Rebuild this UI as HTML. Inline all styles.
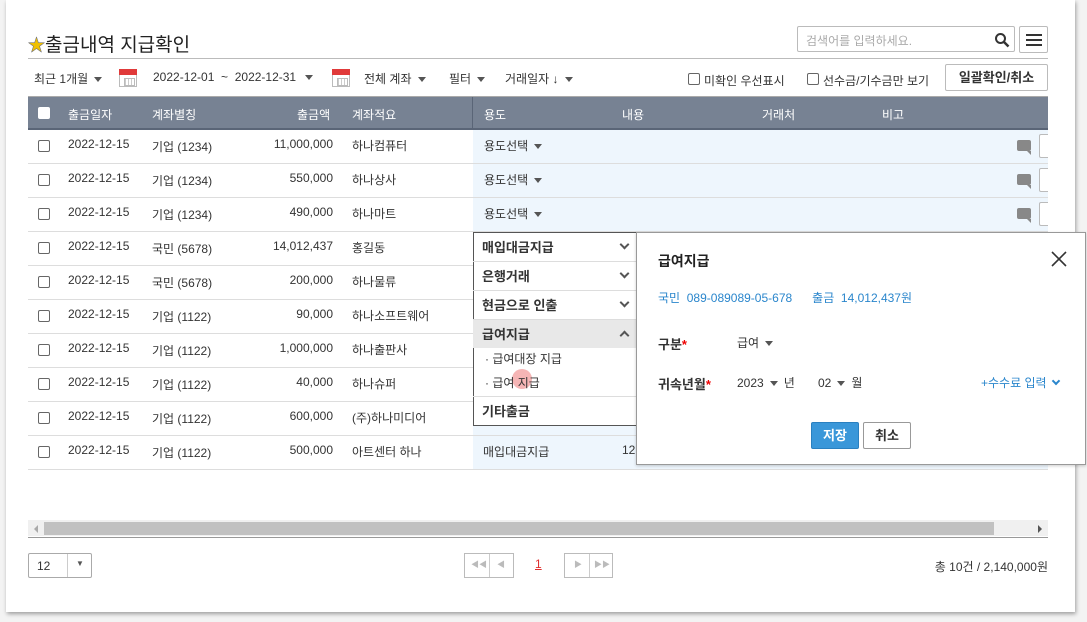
<!DOCTYPE html>
<html><head><meta charset="utf-8"><style>
*{box-sizing:border-box;margin:0;padding:0}
body{width:1087px;height:622px;background:#f3f3f3;font-family:"Liberation Sans","Noto Sans CJK KR",sans-serif;font-size:12px;color:#333;position:relative;overflow:hidden}
.a{position:absolute;white-space:nowrap}
.panel{position:absolute;left:6px;top:0;width:1069px;height:612px;background:#fff;box-shadow:1px 2px 4px rgba(0,0,0,.35)}
.cb{position:absolute;width:12px;height:12px;border:1px solid #666;border-radius:2px;background:#fff}
.tri{display:inline-block;width:0;height:0;border-left:4px solid transparent;border-right:4px solid transparent;border-top:5px solid #555;vertical-align:middle;margin-left:6px}
.row{position:absolute;left:28px;width:1020px;height:34px;border-bottom:1px solid #ddd;overflow:hidden}
.row .bl{position:absolute;left:445px;top:0;width:575px;height:33px;background:#eef6fd}
.cal{position:absolute;width:18px;height:18px;border:1px solid #bbb;background:#fff}
.cal:before{content:"";position:absolute;left:-1px;top:-1px;width:18px;height:6px;background:#e03a3a}
.cal:after{content:"";position:absolute;left:4px;top:8px;width:9px;height:6px;border:1px solid #bbb;background:repeating-linear-gradient(90deg,#ccc 0 1px,transparent 1px 3px)}
.dd{position:absolute;left:473px;width:163px;border-bottom:1px solid #ddd;font-weight:bold;font-size:13px;color:#333}
.chev{position:absolute;right:8px;width:7px;height:7px;border-right:2px solid #555;border-bottom:2px solid #555;transform:rotate(45deg)}
.msg{position:absolute;left:989px;top:10px;width:14px;height:11px;background:#888;border-radius:2px}
.msg:after{content:"";position:absolute;right:0;bottom:-4px;border-left:4px solid transparent;border-top:4px solid #888}
.sb{position:absolute;left:1011px;top:4px;width:20px;height:24px;border:1px solid #bbb;border-radius:2px;background:#fff}
.btn{position:absolute;border:1px solid #bbb;background:#fff}
</style></head><body>
<div class="panel"></div>
<div class="a" style="left:28px;top:30px;font-size:19px;color:#222"><span style="color:#f0c000;font-size:17px;-webkit-text-stroke:0.6px #777">★</span>출금내역 지급확인</div>
<div class="a" style="left:28px;top:58px;width:1020px;height:1px;background:#bbb"></div>
<div class="btn" style="left:797px;top:26px;width:218px;height:26px;border-radius:2px"><span class="a" style="left:8px;top:5px;color:#aaa;font-size:12px">검색어를 입력하세요.</span>
<svg class="a" style="left:196px;top:5px" width="16" height="16"><circle cx="6.5" cy="6.5" r="4.5" stroke="#333" stroke-width="2" fill="none"/><path d="M10 10l4.5 4.5" stroke="#333" stroke-width="2.5"/></svg></div>
<div class="btn" style="left:1019px;top:26px;width:29px;height:27px;border-radius:2px"><div class="a" style="left:6px;top:7px;width:16px;height:2px;background:#333;box-shadow:0 5px 0 #333,0 10px 0 #333"></div></div>

<div class="a" style="left:34px;top:70px">최근 1개월<span class="tri"></span></div>
<div class="cal" style="left:119px;top:69px"></div>
<div class="a" style="left:153px;top:70px">2022-12-01 &nbsp;~ &nbsp;2022-12-31 <span class="tri"></span></div>
<div class="cal" style="left:332px;top:69px"></div>
<div class="a" style="left:364px;top:70px">전체 계좌<span class="tri"></span></div>
<div class="a" style="left:449px;top:70px">필터<span class="tri"></span></div>
<div class="a" style="left:505px;top:70px">거래일자 ↓<span class="tri"></span></div>
<div class="cb" style="left:688px;top:73px"></div><div class="a" style="left:704px;top:72px">미확인 우선표시</div>
<div class="cb" style="left:807px;top:73px"></div><div class="a" style="left:823px;top:72px">선수금/기수금만 보기</div>
<div class="btn" style="left:945px;top:64px;width:103px;height:27px;border-radius:2px;font-weight:bold;font-size:13px;text-align:center;line-height:25px">일괄확인/취소</div>

<div class="a" style="left:28px;top:96px;width:1020px;height:34px;background:#778293;border-top:1px solid #aaa;border-bottom:2px solid #5a6577;color:#fff">
<div class="cb" style="left:10px;top:10px;border-color:#fff"></div>
<span class="a" style="left:40px;top:9px">출금일자</span><span class="a" style="left:124px;top:9px">계좌별칭</span><span class="a" style="left:269px;top:9px">출금액</span><span class="a" style="left:324px;top:9px">계좌적요</span>
<div class="a" style="left:444px;top:0;width:1px;height:32px;background:#5a6577"></div>
<span class="a" style="left:456px;top:9px">용도</span><span class="a" style="left:594px;top:9px">내용</span><span class="a" style="left:734px;top:9px">거래처</span><span class="a" style="left:854px;top:9px">비고</span></div>

<div class="row" style="top:130px"><div class="bl"></div><div class="cb" style="left:10px;top:10px"></div><span class="a" style="left:40px;top:7px">2022-12-15</span><span class="a" style="left:124px;top:8px">기업 (1234)</span><span class="a" style="right:715px;top:7px">11,000,000</span><span class="a" style="left:324px;top:7px">하나컴퓨터</span><span class="a" style="left:456px;top:7px">용도선택<span class="tri"></span></span><div class="msg"></div><div class="sb"></div></div>
<div class="row" style="top:164px"><div class="bl"></div><div class="cb" style="left:10px;top:10px"></div><span class="a" style="left:40px;top:7px">2022-12-15</span><span class="a" style="left:124px;top:8px">기업 (1234)</span><span class="a" style="right:715px;top:7px">550,000</span><span class="a" style="left:324px;top:7px">하나상사</span><span class="a" style="left:456px;top:7px">용도선택<span class="tri"></span></span><div class="msg"></div><div class="sb"></div></div>
<div class="row" style="top:198px"><div class="bl"></div><div class="cb" style="left:10px;top:10px"></div><span class="a" style="left:40px;top:7px">2022-12-15</span><span class="a" style="left:124px;top:8px">기업 (1234)</span><span class="a" style="right:715px;top:7px">490,000</span><span class="a" style="left:324px;top:7px">하나마트</span><span class="a" style="left:456px;top:7px">용도선택<span class="tri"></span></span><div class="msg"></div><div class="sb"></div></div>
<div class="row" style="top:232px"><div class="bl"></div><div class="cb" style="left:10px;top:10px"></div><span class="a" style="left:40px;top:7px">2022-12-15</span><span class="a" style="left:124px;top:8px">국민 (5678)</span><span class="a" style="right:715px;top:7px">14,012,437</span><span class="a" style="left:324px;top:7px">홍길동</span></div>
<div class="row" style="top:266px"><div class="bl"></div><div class="cb" style="left:10px;top:10px"></div><span class="a" style="left:40px;top:7px">2022-12-15</span><span class="a" style="left:124px;top:8px">국민 (5678)</span><span class="a" style="right:715px;top:7px">200,000</span><span class="a" style="left:324px;top:7px">하나물류</span></div>
<div class="row" style="top:300px"><div class="bl"></div><div class="cb" style="left:10px;top:10px"></div><span class="a" style="left:40px;top:7px">2022-12-15</span><span class="a" style="left:124px;top:8px">기업 (1122)</span><span class="a" style="right:715px;top:7px">90,000</span><span class="a" style="left:324px;top:7px">하나소프트웨어</span></div>
<div class="row" style="top:334px"><div class="bl"></div><div class="cb" style="left:10px;top:10px"></div><span class="a" style="left:40px;top:7px">2022-12-15</span><span class="a" style="left:124px;top:8px">기업 (1122)</span><span class="a" style="right:715px;top:7px">1,000,000</span><span class="a" style="left:324px;top:7px">하나출판사</span></div>
<div class="row" style="top:368px"><div class="bl"></div><div class="cb" style="left:10px;top:10px"></div><span class="a" style="left:40px;top:7px">2022-12-15</span><span class="a" style="left:124px;top:8px">기업 (1122)</span><span class="a" style="right:715px;top:7px">40,000</span><span class="a" style="left:324px;top:7px">하나슈퍼</span></div>
<div class="row" style="top:402px"><div class="bl"></div><div class="cb" style="left:10px;top:10px"></div><span class="a" style="left:40px;top:7px">2022-12-15</span><span class="a" style="left:124px;top:8px">기업 (1122)</span><span class="a" style="right:715px;top:7px">600,000</span><span class="a" style="left:324px;top:7px">(주)하나미디어</span></div>
<div class="row" style="top:436px"><div class="bl"></div><div class="cb" style="left:10px;top:10px"></div><span class="a" style="left:40px;top:7px">2022-12-15</span><span class="a" style="left:124px;top:8px">기업 (1122)</span><span class="a" style="right:715px;top:7px">500,000</span><span class="a" style="left:324px;top:7px">아트센터 하나</span><span class="a" style="left:455px;top:7px">매입대금지급</span><span class="a" style="left:594px;top:7px">12</span></div>

<div class="a" style="left:473px;top:232px;width:164px;height:194px;background:#fff;border:1px solid #555;border-right:none"></div>
<div class="dd" style="top:233px;height:29px"><span class="a" style="left:9px;top:4px">매입대금지급</span><div class="chev" style="top:8px"></div></div>
<div class="dd" style="top:262px;height:29px"><span class="a" style="left:9px;top:4px">은행거래</span><div class="chev" style="top:8px"></div></div>
<div class="dd" style="top:291px;height:29px"><span class="a" style="left:9px;top:4px">현금으로 인출</span><div class="chev" style="top:8px"></div></div>
<div class="dd" style="top:320px;height:28px;background:#e8e8e8;border:none"><span class="a" style="left:9px;top:4px">급여지급</span><div class="chev" style="top:12px;transform:rotate(-135deg)"></div></div>
<div class="a" style="left:485px;top:350px;font-size:12px">· 급여대장 지급</div>
<div class="a" style="left:512px;top:369px;width:20px;height:20px;border-radius:50%;background:#f5b5b5"></div>
<div class="a" style="left:485px;top:374px;font-size:12px">· 급여 지급</div>
<div class="dd" style="top:396px;height:29px;border-top:1px solid #ddd;border-bottom:none"><span class="a" style="left:9px;top:4px">기타출금</span></div>

<div class="a" style="left:636px;top:232px;width:450px;height:233px;background:#fff;border:1px solid #999;box-shadow:0 1px 3px rgba(0,0,0,.2)">
<span class="a" style="left:21px;top:18px;font-size:14px;font-weight:bold;color:#222">급여지급</span>
<svg class="a" style="left:414px;top:18px" width="16" height="16"><path d="M1 1L15 15M15 1L1 15" stroke="#333" stroke-width="1.6"/></svg>
<span class="a" style="left:21px;top:56px;color:#2a86cc">국민 &nbsp;089-089089-05-678 &nbsp; &nbsp; &nbsp;출금 &nbsp;14,012,437원</span>
<span class="a" style="left:21px;top:101px;font-weight:bold;font-size:13px">구분<span style="color:#e00">*</span></span>
<span class="a" style="left:100px;top:101px">급여<span class="tri"></span></span>
<span class="a" style="left:21px;top:141px;font-weight:bold;font-size:13px">귀속년월<span style="color:#e00">*</span></span>
<span class="a" style="left:100px;top:141px">2023<span class="tri" style="margin-right:6px"></span>년</span>
<span class="a" style="left:181px;top:141px">02<span class="tri" style="margin-right:6px"></span>월</span>
<span class="a" style="left:344px;top:141px;color:#2a86cc">+수수료 입력 <b style="display:inline-block;width:6px;height:6px;border-right:2px solid #2a86cc;border-bottom:2px solid #2a86cc;transform:rotate(45deg);vertical-align:3px;margin-left:3px"></b></span>
<div class="a" style="left:174px;top:189px;width:48px;height:27px;background:#3a97d9;border:1px solid #2a80c0;border-radius:2px;color:#fff;font-weight:bold;font-size:13px;text-align:center;line-height:25px">저장</div>
<div class="btn" style="left:226px;top:189px;width:48px;height:27px;border-radius:2px;font-weight:bold;font-size:13px;text-align:center;line-height:25px;border-color:#999">취소</div>
</div>

<div class="a" style="left:28px;top:520px;width:1020px;height:16px;background:#f0f0f0"></div>
<div class="a" style="left:44px;top:522px;width:950px;height:13px;background:#c1c1c1"></div>
<div class="a" style="left:34px;top:525px;border-top:4px solid transparent;border-bottom:4px solid transparent;border-right:4px solid #aaa"></div>
<div class="a" style="left:1038px;top:525px;border-top:4px solid transparent;border-bottom:4px solid transparent;border-left:4px solid #555"></div>
<div class="a" style="left:28px;top:537px;width:1020px;height:1px;background:#999"></div>

<div class="btn" style="left:28px;top:553px;width:64px;height:25px;border-radius:2px;border-color:#aaa"><span class="a" style="left:8px;top:5px">12</span><div class="a" style="left:38px;top:0;width:1px;height:23px;background:#ccc"></div><span class="a" style="left:47px;top:5px;font-size:8px;color:#555">▼</span></div>
<div class="btn" style="left:464px;top:553px;width:50px;height:25px;border-color:#bbb"><div class="a" style="left:24px;top:0;width:1px;height:23px;background:#ccc"></div><span class="a" style="left:6px;top:5px;font-size:8px;color:#bbb">◀◀</span><span class="a" style="left:32px;top:5px;font-size:8px;color:#bbb">◀</span></div>
<div class="a" style="left:535px;top:557px;color:#e03030;text-decoration:underline">1</div>
<div class="btn" style="left:564px;top:553px;width:49px;height:25px;border-color:#bbb"><div class="a" style="left:24px;top:0;width:1px;height:23px;background:#ccc"></div><span class="a" style="left:9px;top:5px;font-size:8px;color:#bbb">▶</span><span class="a" style="left:29px;top:5px;font-size:8px;color:#bbb">▶▶</span></div>
<div class="a" style="right:39px;top:558px;font-size:12px">총 10건 / 2,140,000원</div>
</body></html>
